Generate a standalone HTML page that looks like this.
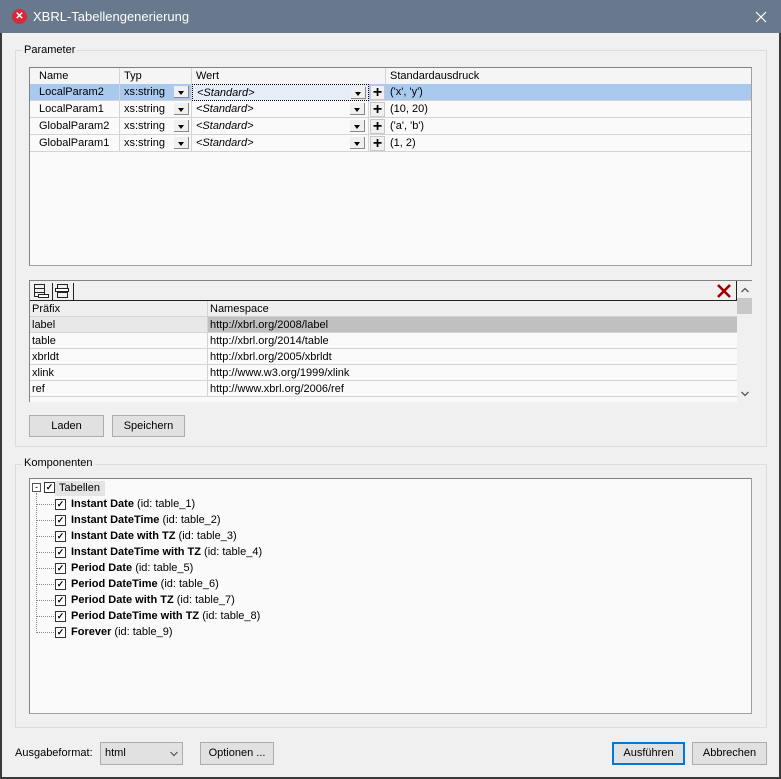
<!DOCTYPE html>
<html><head><meta charset="utf-8"><style>
*{box-sizing:border-box;margin:0;padding:0}
body{width:781px;height:779px;overflow:hidden;background:#f0f0f0;font-family:"Liberation Sans",sans-serif;font-size:11px;color:#000;position:relative}
.a{position:absolute}
.title{left:0;top:0;width:781px;height:33px;background:#68788d;color:#fff;font-size:13px}
.win{left:0;top:33px;width:781px;height:746px;border:1px solid #3a3a3a;border-top:0;border-left-width:2px;border-right-width:2px;border-bottom-width:2px}
.grp{border:1px solid #dcdcdc;}
.lbl{background:#f0f0f0;padding:0 2px;font-size:11px}
.box{background:#fafafa;border:1px solid #a0a0a0;border-top-color:#828282;border-left-color:#828282}
.btn{background:#e1e1e1;border:1px solid #adadad;text-align:center;line-height:20px;font-size:11px}
.row{position:absolute;left:0;height:17px;line-height:17px;border-bottom:1px solid #d4d4d4;width:100%}
.c{position:absolute;top:0;height:17px;border-right:1px solid #d4d4d4;padding-left:4px;white-space:nowrap}
.dd{position:absolute;width:15px;height:12px;top:2px;background:#f0f0f0;border-right:1px solid #888;border-bottom:1px solid #888}
.dd:after{content:"";position:absolute;left:4px;top:5px;border-left:3.5px solid transparent;border-right:3.5px solid transparent;border-top:4px solid #000}
.pl{position:absolute;width:15px;height:15px;top:1px;font-weight:bold;font-size:16px;line-height:14px;text-align:center;background:#f0f0f0;border:1px solid #c8c8c8}
.nr{position:absolute;left:0;height:16px;line-height:17px;width:707px;border-bottom:1px solid #d4d4d4}
.nr span{position:absolute;top:0;padding-left:2px}
.cb{position:absolute;width:11px;height:11px;border:1px solid #333;background:#fff;font-size:9px;line-height:9px;text-align:center;font-weight:bold}
.ti{position:absolute;left:71px;font-size:11px;white-space:nowrap;line-height:15px}
.dot{position:absolute;border-top:1px dotted #888;width:18px;left:36px}
</style></head><body>
<div class="a title">
 <div class="a" style="left:12px;top:9px;width:15px;height:15px;border-radius:50%;background:#d8283a;color:#fff;font-size:10px;font-weight:bold;text-align:center;line-height:15px">✕</div>
 <div class="a" style="left:33px;top:9px">XBRL-Tabellengenerierung</div>
 <svg class="a" style="left:755px;top:11px" width="12" height="12"><path d="M1 1L11 11M11 1L1 11" stroke="#fff" stroke-width="1.2"/></svg>
</div>
<div class="a win"></div>

<!-- Parameter group -->
<div class="a grp" style="left:15px;top:50px;width:752px;height:397px"></div>
<div class="a lbl" style="left:22px;top:44px">Parameter</div>
<div class="a box" style="left:29px;top:67px;width:723px;height:199px;background:#fafafa">
 <div class="row" style="top:0;background:#f5f5f5"><div class="c" style="left:5px;width:85px">Name</div><div class="c" style="left:90px;width:72px">Typ</div><div class="c" style="left:162px;width:194px">Wert</div><div class="c" style="left:356px;border:0">Standardausdruck</div></div>
 <div class="row" style="top:16px;background:#a9c9ef"><div class="c" style="left:5px;width:85px">LocalParam2</div><div class="c" style="left:90px;width:72px">xs:string<div class="dd" style="left:54px"></div></div><div class="c" style="left:162px;width:177px;background:#e6eefa;border:1px dotted #000"><i>&lt;Standard&gt;</i><div class="dd" style="left:158px"></div></div><div class="pl" style="left:340px">+</div><div class="c" style="left:356px;border:0">('x', 'y')</div></div>
 <div class="row" style="top:33px"><div class="c" style="left:5px;width:85px">LocalParam1</div><div class="c" style="left:90px;width:72px">xs:string<div class="dd" style="left:54px"></div></div><div class="c" style="left:162px;width:177px"><i>&lt;Standard&gt;</i><div class="dd" style="left:158px"></div></div><div class="pl" style="left:340px">+</div><div class="c" style="left:356px;border:0">(10, 20)</div></div>
 <div class="row" style="top:50px"><div class="c" style="left:5px;width:85px">GlobalParam2</div><div class="c" style="left:90px;width:72px">xs:string<div class="dd" style="left:54px"></div></div><div class="c" style="left:162px;width:177px"><i>&lt;Standard&gt;</i><div class="dd" style="left:158px"></div></div><div class="pl" style="left:340px">+</div><div class="c" style="left:356px;border:0">('a', 'b')</div></div>
 <div class="row" style="top:67px"><div class="c" style="left:5px;width:85px">GlobalParam1</div><div class="c" style="left:90px;width:72px">xs:string<div class="dd" style="left:54px"></div></div><div class="c" style="left:162px;width:177px"><i>&lt;Standard&gt;</i><div class="dd" style="left:158px"></div></div><div class="pl" style="left:340px">+</div><div class="c" style="left:356px;border:0">(1, 2)</div></div>
</div>

<!-- namespace panel -->
<div class="a" style="left:29px;top:280px;width:723px;height:122px;border-left:1px solid #828282;border-top:1px solid #828282;background:#fafafa;overflow:hidden">
 <div class="a" style="left:0;top:0;width:707px;height:20px;background:#f0f0f0;border-bottom:1px solid #222;border-right:1px solid #222">
  <svg class="a" style="left:2px;top:2px" width="44" height="17"><g fill="none" stroke="#222"><rect x="2.5" y="1.5" width="10" height="4"/><rect x="2.5" y="5.5" width="10" height="4"/><rect x="2.5" y="9.5" width="10" height="4"/><rect x="6.5" y="11.5" width="10" height="3" fill="#fff"/><line x1="20.5" y1="0" x2="20.5" y2="17"/><rect x="25.5" y="1.5" width="10" height="4"/><rect x="25.5" y="9.5" width="10" height="5"/><rect x="23.5" y="5.5" width="13" height="3" fill="#fff"/><line x1="41.5" y1="0" x2="41.5" y2="17"/></g></svg>
  <svg class="a" style="left:686px;top:3px" width="16" height="14"><path d="M2 1L14 13M14 1L2 13" stroke="#a00000" stroke-width="2.6"/></svg>
 </div>
 <div class="nr" style="top:20px;background:#efefef"><span style="left:0">Präfix</span><span style="left:177px;border-left:1px solid #d4d4d4;height:16px">Namespace</span></div>
 <div class="nr" style="top:36px;background:#c0c0c0"><span style="left:0;width:177px;background:#e8e8e8;height:15px">label</span><span style="left:177px;border-left:1px solid #d4d4d4;height:16px">http://xbrl.org/2008/label</span></div>
 <div class="nr" style="top:52px"><span style="left:0">table</span><span style="left:177px;border-left:1px solid #d4d4d4;height:16px">http://xbrl.org/2014/table</span></div>
 <div class="nr" style="top:68px"><span style="left:0">xbrldt</span><span style="left:177px;border-left:1px solid #d4d4d4;height:16px">http://xbrl.org/2005/xbrldt</span></div>
 <div class="nr" style="top:84px"><span style="left:0">xlink</span><span style="left:177px;border-left:1px solid #d4d4d4;height:16px">http://www.w3.org/1999/xlink</span></div>
 <div class="nr" style="top:100px"><span style="left:0">ref</span><span style="left:177px;border-left:1px solid #d4d4d4;height:16px">http://www.xbrl.org/2006/ref</span></div>
 <div class="a" style="left:707px;top:0;width:16px;height:122px;background:#f0f0f0">
  <svg class="a" style="left:4px;top:6px" width="8" height="6"><path d="M0.5 5L4 1.5L7.5 5" stroke="#555" fill="none" stroke-width="1.3"/></svg>
  <div class="a" style="left:0;top:17px;width:15px;height:16px;background:#c8c8c8"></div>
  <svg class="a" style="left:4px;top:110px" width="8" height="6"><path d="M0.5 1L4 4.5L7.5 1" stroke="#555" fill="none" stroke-width="1.3"/></svg>
 </div>
</div>
<div class="a btn" style="left:29px;top:415px;width:75px;height:22px">Laden</div>
<div class="a btn" style="left:112px;top:415px;width:73px;height:22px">Speichern</div>

<!-- Komponenten -->
<div class="a grp" style="left:15px;top:464px;width:752px;height:264px"></div>
<div class="a lbl" style="left:22px;top:457px">Komponenten</div>
<div class="a box" style="left:29px;top:478px;width:723px;height:236px">
 <div class="a" style="left:2px;top:4px;width:9px;height:9px;border:1px solid #555;font-size:9px;line-height:6px;text-align:center;background:#fff">-</div>
 <div class="a" style="left:25px;top:2px;width:50px;height:15px;background:#e4e4e4"></div>
 <div class="cb" style="left:14px;top:3px">✓</div>
 <div class="a" style="left:29px;top:2px;line-height:15px">Tabellen</div>
 <div class="a" style="left:6px;top:14px;height:138px;border-left:1px dotted #888"></div>
</div>
<div class="a" style="left:0;top:0;width:781px">
 <div class="dot" style="top:504px"></div><div class="cb" style="left:55px;top:499px">✓</div><div class="ti" style="top:497px"><b>Instant Date</b> (id: table_1)</div>
 <div class="dot" style="top:520px"></div><div class="cb" style="left:55px;top:515px">✓</div><div class="ti" style="top:513px"><b>Instant DateTime</b> (id: table_2)</div>
 <div class="dot" style="top:536px"></div><div class="cb" style="left:55px;top:531px">✓</div><div class="ti" style="top:529px"><b>Instant Date with TZ</b> (id: table_3)</div>
 <div class="dot" style="top:552px"></div><div class="cb" style="left:55px;top:547px">✓</div><div class="ti" style="top:545px"><b>Instant DateTime with TZ</b> (id: table_4)</div>
 <div class="dot" style="top:568px"></div><div class="cb" style="left:55px;top:563px">✓</div><div class="ti" style="top:561px"><b>Period Date</b> (id: table_5)</div>
 <div class="dot" style="top:584px"></div><div class="cb" style="left:55px;top:579px">✓</div><div class="ti" style="top:577px"><b>Period DateTime</b> (id: table_6)</div>
 <div class="dot" style="top:600px"></div><div class="cb" style="left:55px;top:595px">✓</div><div class="ti" style="top:593px"><b>Period Date with TZ</b> (id: table_7)</div>
 <div class="dot" style="top:616px"></div><div class="cb" style="left:55px;top:611px">✓</div><div class="ti" style="top:609px"><b>Period DateTime with TZ</b> (id: table_8)</div>
 <div class="dot" style="top:632px"></div><div class="cb" style="left:55px;top:627px">✓</div><div class="ti" style="top:625px"><b>Forever</b> (id: table_9)</div>
</div>

<!-- bottom -->
<div class="a" style="left:15px;top:747px">Ausgabeformat:</div>
<div class="a btn" style="left:100px;top:742px;width:83px;height:23px;text-align:left;padding-left:4px">html<svg class="a" style="left:69px;top:8px" width="8" height="6"><path d="M0.5 1L4 4.5L7.5 1" stroke="#555" fill="none" stroke-width="1.2"/></svg></div>
<div class="a btn" style="left:200px;top:742px;width:74px;height:23px">Optionen ...</div>
<div class="a btn" style="left:612px;top:742px;width:73px;height:23px;border:2px solid #0078d7;line-height:19px">Ausführen</div>
<div class="a btn" style="left:692px;top:742px;width:75px;height:23px">Abbrechen</div>
</body></html>
